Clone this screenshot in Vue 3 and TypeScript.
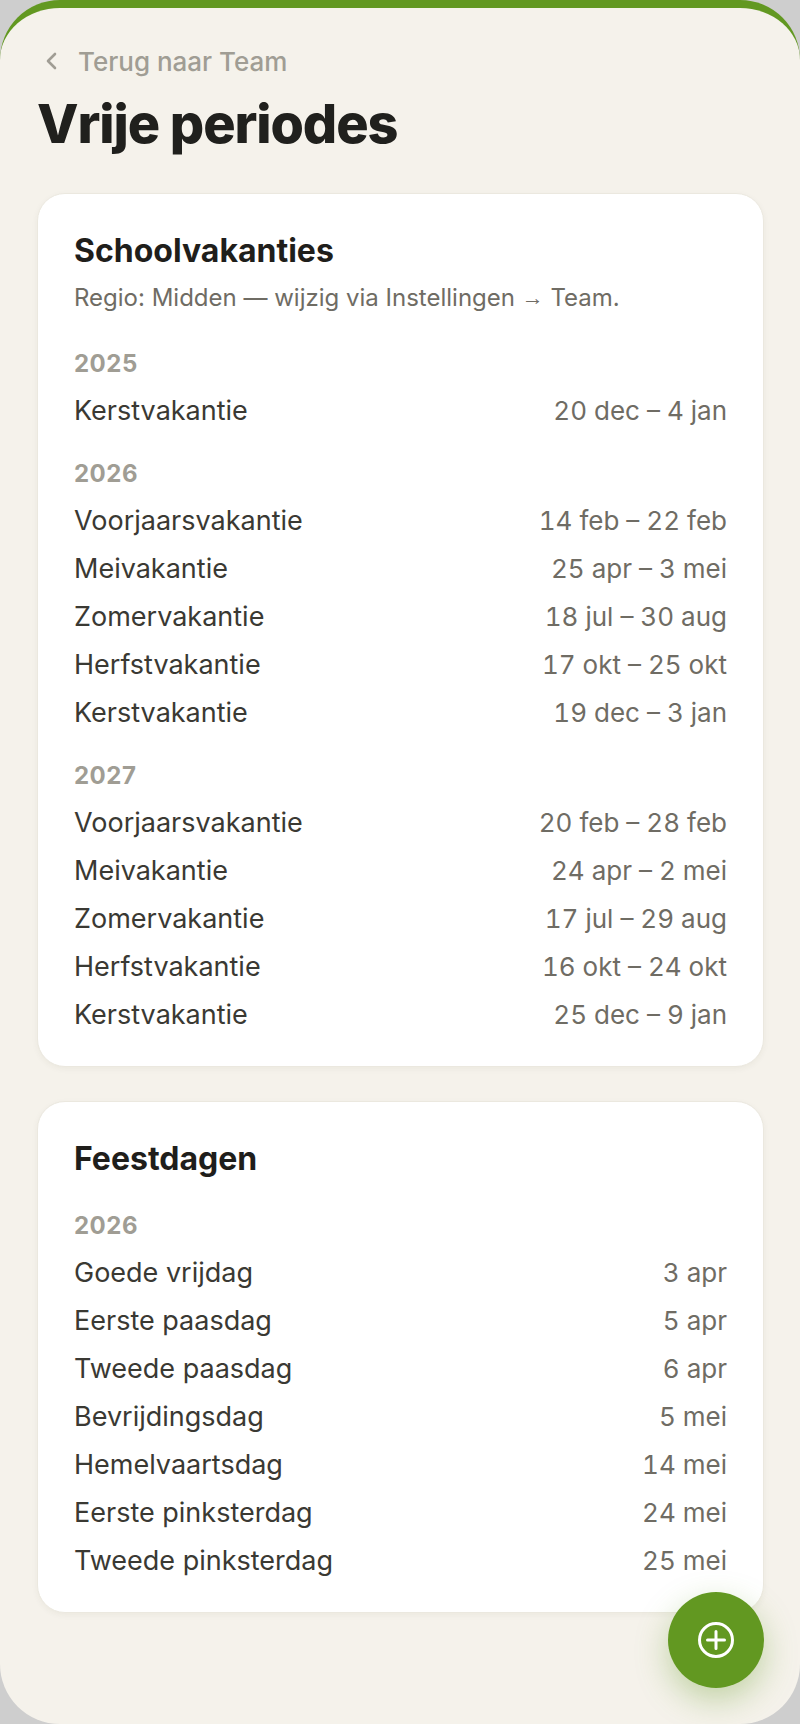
<script setup lang="ts">
interface Row {
  name: string
  dates: string
}

interface YearGroup {
  year: string
  rows: Row[]
}

const schoolYears: YearGroup[] = [
  {
    year: '2025',
    rows: [{ name: 'Kerstvakantie', dates: '20 dec – 4 jan' }]
  },
  {
    year: '2026',
    rows: [
      { name: 'Voorjaarsvakantie', dates: '14 feb – 22 feb' },
      { name: 'Meivakantie', dates: '25 apr – 3 mei' },
      { name: 'Zomervakantie', dates: '18 jul – 30 aug' },
      { name: 'Herfstvakantie', dates: '17 okt – 25 okt' },
      { name: 'Kerstvakantie', dates: '19 dec – 3 jan' }
    ]
  },
  {
    year: '2027',
    rows: [
      { name: 'Voorjaarsvakantie', dates: '20 feb – 28 feb' },
      { name: 'Meivakantie', dates: '24 apr – 2 mei' },
      { name: 'Zomervakantie', dates: '17 jul – 29 aug' },
      { name: 'Herfstvakantie', dates: '16 okt – 24 okt' },
      { name: 'Kerstvakantie', dates: '25 dec – 9 jan' }
    ]
  }
]

const holidays: YearGroup[] = [
  {
    year: '2026',
    rows: [
      { name: 'Goede vrijdag', dates: '3 apr' },
      { name: 'Eerste paasdag', dates: '5 apr' },
      { name: 'Tweede paasdag', dates: '6 apr' },
      { name: 'Bevrijdingsdag', dates: '5 mei' },
      { name: 'Hemelvaartsdag', dates: '14 mei' },
      { name: 'Eerste pinksterdag', dates: '24 mei' },
      { name: 'Tweede pinksterdag', dates: '25 mei' }
    ]
  }
]
</script>

<template>
  <div class="phone">
    <a class="back">
      <svg class="back-icon" viewBox="0 0 24 24" fill="none" stroke="currentColor" stroke-width="2.6" stroke-linecap="round" stroke-linejoin="round">
        <path d="M15 5l-7 7 7 7" />
      </svg>
      <span>Terug naar Team</span>
    </a>
    <h1 class="page-title">Vrije periodes</h1>

    <section class="card">
      <h2 class="card-title">Schoolvakanties</h2>
      <p class="card-note">Regio: Midden — wijzig via Instellingen <span class="arrow">→</span> Team.</p>
      <div v-for="group in schoolYears" :key="group.year" class="year-group">
        <div class="year">{{ group.year }}</div>
        <div v-for="row in group.rows" :key="row.name" class="row">
          <span class="row-name">{{ row.name }}</span>
          <span class="row-dates">{{ row.dates }}</span>
        </div>
      </div>
    </section>

    <section class="card">
      <h2 class="card-title">Feestdagen</h2>
      <div v-for="group in holidays" :key="group.year" class="year-group">
        <div class="year">{{ group.year }}</div>
        <div v-for="row in group.rows" :key="row.name" class="row">
          <span class="row-name">{{ row.name }}</span>
          <span class="row-dates">{{ row.dates }}</span>
        </div>
      </div>
    </section>

    <button class="fab" type="button" aria-label="Toevoegen">
      <svg viewBox="0 0 36 36" fill="none" stroke="#fff" stroke-width="3" stroke-linecap="round">
        <circle cx="18" cy="18" r="16.5" />
        <path d="M18 9.5v17M9.5 18h17" />
      </svg>
    </button>
  </div>
</template>

<style>
html,
body {
  margin: 0;
  background: #cecece;
}
</style>

<style scoped>
.phone {
  position: relative;
  box-sizing: border-box;
  width: 800px;
  height: 1724px;
  padding: 38px 37px 0;
  overflow: hidden;
  background: #f5f2eb;
  border-top: 8px solid #629821;
  border-radius: 60px;
  font-family: Inter, "Liberation Sans", sans-serif;
}

.back {
  display: flex;
  align-items: center;
  gap: 14px;
  height: 30px;
  padding-left: 3px;
  color: #a09d94;
  font-size: 26px;
  font-weight: 500;
}

.back-icon {
  width: 24px;
  height: 24px;
}

.page-title {
  margin: 17px 0 38px;
  color: #20201d;
  font-size: 54px;
  font-weight: 800;
  line-height: 62px;
  letter-spacing: -1.08px;
}

.card {
  box-sizing: border-box;
  width: 727px;
  margin-bottom: 34px;
  padding: 38px 36px 28px;
  background: #fff;
  border: 1px solid #ebe8df;
  border-radius: 28px;
  box-shadow: 0 2px 6px rgba(60, 50, 20, 0.05);
}

.card-title {
  margin: 0;
  color: #1f1e1b;
  font-size: 32px;
  font-weight: 700;
  line-height: 38px;
}

.card-note {
  margin: 12px 0 31px;
  color: #6f6c64;
  font-size: 24px;
  line-height: 32px;
}

.arrow {
  font-family: "Liberation Sans", sans-serif;
  font-size: 22px;
  line-height: 1;
  vertical-align: 1px;
}

.year-group {
  margin-top: 21px;
}

.card-title + .year-group {
  margin-top: 29px;
}

.year {
  margin-bottom: 3px;
  color: #a09d94;
  font-size: 24px;
  font-weight: 700;
  line-height: 38px;
  letter-spacing: 0.5px;
}

.row {
  display: flex;
  justify-content: space-between;
  align-items: center;
  height: 48px;
}

.row-name {
  color: #3a3933;
  font-size: 27px;
}

.row-dates {
  color: #6f6c64;
  font-size: 26px;
  font-variant-numeric: tabular-nums;
}

.fab {
  position: absolute;
  right: 36px;
  bottom: 36px;
  display: flex;
  align-items: center;
  justify-content: center;
  width: 96px;
  height: 96px;
  padding: 0;
  background: #629821;
  border: none;
  border-radius: 50%;
  box-shadow: 0 12px 32px rgba(98, 152, 33, 0.35);
}

.fab svg {
  width: 36px;
  height: 36px;
}
</style>
